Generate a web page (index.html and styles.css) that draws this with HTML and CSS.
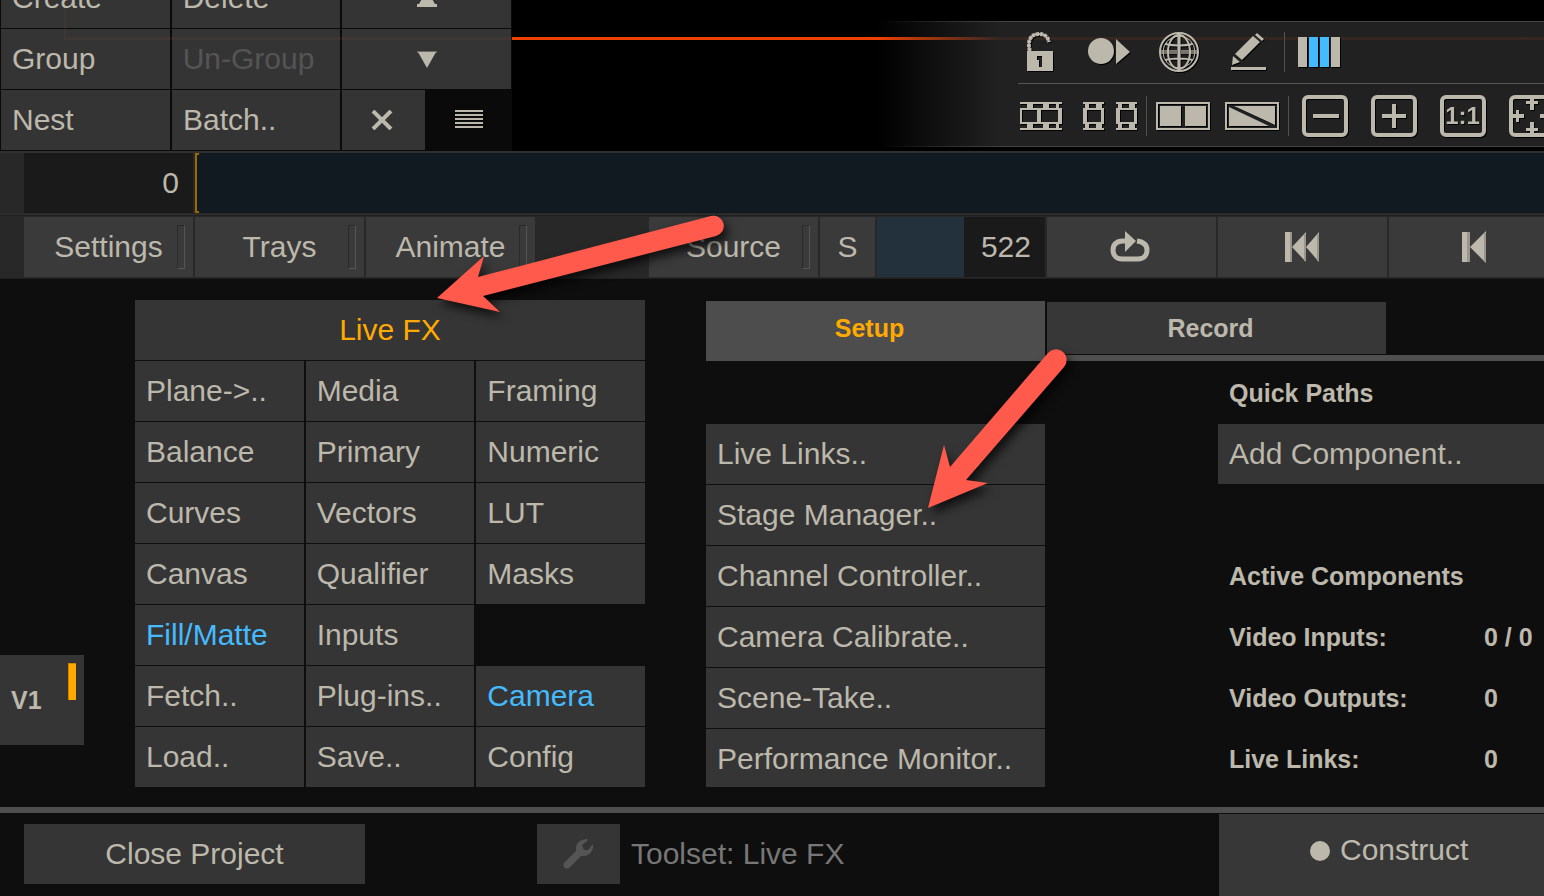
FILE: index.html
```html
<!DOCTYPE html>
<html lang="en">
<head>
<meta charset="utf-8">
<title>Live FX</title>
<link rel="stylesheet" href="styles.css">
</head>
<body>
<section class="viewport">
  <div class="crop-frame"></div>
  <div class="edit-panel">
    <div class="edit-row">
      <button class="btn">Create</button>
      <button class="btn">Delete</button>
      <button class="btn center" aria-label="Move up"><svg class="glyph" width="20" height="17" viewBox="0 0 20 17"><path d="M10 0L18 14H20V17H0V14H2z"/></svg></button>
    </div>
    <div class="edit-row">
      <button class="btn">Group</button>
      <button class="btn" disabled>Un-Group</button>
      <button class="btn center" aria-label="Move down"><svg class="glyph" width="20" height="17" viewBox="0 0 20 17"><path d="M1 1H19L10 17z"/><path d="M0 0H20V2H0z" opacity=".4"/></svg></button>
    </div>
    <div class="edit-row last">
      <button class="btn">Nest</button>
      <button class="btn">Batch..</button>
      <button class="btn center" aria-label="Close"><svg width="26" height="20" viewBox="0 0 26 20"><path class="stroke" stroke-width="4" d="M2 1L20 19M20 1L2 19"/></svg></button>
      <button class="btn center menu" aria-label="Menu"><svg class="glyph" width="28" height="20" viewBox="0 0 28 20"><path d="M0 0h28v2H0zM0 4h28v2H0zM0 8h28v2H0zM0 12h28v2H0zM0 16h28v2H0z"/></svg></button>
    </div>
  </div>
  <div class="toolbar">
    <div class="tool-row">
      <button class="tool" aria-label="Lock"><svg class="glyph" width="28" height="42" viewBox="0 0 28 42"><path class="stroke" stroke-width="4" stroke-dasharray="3 1" d="M3 20C0 11 3 3 12 3C18 3 21 6 22 11"/><path class="stroke" stroke-width="2" d="M3 20C0 11 3 3 12 3C18 3 21 6 22 11"/><path fill-rule="evenodd" d="M0 20H26V40H0zM10 25V29H12V36H15V25z"/></svg></button>
      <button class="tool" aria-label="Record and play"><svg class="glyph" width="44" height="28" viewBox="0 0 44 28"><circle cx="13" cy="13" r="13"/><path d="M28 1L42 14L28 26z"/></svg></button>
      <button class="tool" aria-label="Globe"><svg width="42" height="42" viewBox="0 0 42 42"><g class="stroke" stroke-width="2"><circle cx="21" cy="21" r="19"/><circle cx="21" cy="21" r="16" stroke-width="1"/><ellipse cx="21" cy="21" rx="11" ry="17"/><path d="M21 2V40M7 13Q21 16 35 13M7 29Q21 26 35 29"/><path stroke-width="4" opacity=".6" d="M3 21H39M21 3V39"/></g></svg></button>
      <button class="tool" aria-label="Draw"><svg class="glyph" width="36" height="38" viewBox="0 0 36 38"><path d="M5 21L23 3L30 9L12 27zM25 2L27 0L34 6L32 8zM3 23L10 29L2 32z"/><path d="M1 34H36V37H1z"/></svg></button>
      <span class="sep"></span>
      <button class="tool" aria-label="Columns"><svg class="glyph" width="46" height="30" viewBox="0 0 46 30"><path d="M0 0h9v30H0zM33 0h9v30h-9z"/><path class="blue" d="M11 0h9v30h-9zM22 0h9v30h-9z"/></svg></button>
    </div>
    <div class="tool-row">
      <button class="tool" aria-label="Film strip"><svg class="glyph" width="42" height="28" viewBox="0 0 42 28"><path fill-rule="evenodd" d="M0 0H42V2H0zM0 26H42V28H0zM7 2h6v4H7zM23 2h6v4h-6zM36 2h3v4h-3zM7 22h6v4H7zM23 22h6v4h-6zM36 22h3v4h-3zM0 6H42V22H0zM2 8V20H17V8zM21 8V20H38V8z"/></svg></button>
      <button class="tool" aria-label="Split film"><svg class="glyph" width="54" height="28" viewBox="0 0 54 28"><path fill-rule="evenodd" d="M0 0H21V2H0zM0 26H21V28H0zM2 2h4v4H2zM13 2h6v4h-6zM2 22h4v4H2zM13 22h6v4h-6zM0 6H21V22H0zM4 8V20H18V8zM33 0H54V2H33zM33 26H54V28H33zM35 2h4v4h-4zM46 2h6v4h-6zM35 22h4v4h-4zM46 22h6v4h-6zM33 6H54V22H33zM37 8V20H51V8z"/></svg></button>
      <span class="sep"></span>
      <button class="tool" aria-label="Dual view"><svg class="glyph" width="54" height="28" viewBox="0 0 54 28"><path fill-rule="evenodd" d="M0 0H54V28H0zM2 2V26H52V2zM4 4H25V24H4zM29 4H50V24H29z"/></svg></button>
      <button class="tool" aria-label="Wipe view"><svg class="glyph" width="54" height="28" viewBox="0 0 54 28"><path fill-rule="evenodd" d="M0 0H54V28H0zM2 2V26H52V2z"/><path d="M9 4H50V23zM4 5L44 24H4z"/></svg></button>
      <span class="sep"></span>
      <button class="tool" aria-label="Zoom out"><svg width="46" height="42" viewBox="0 0 46 42"><rect class="stroke" stroke-width="4" x="2" y="2" width="42" height="38" rx="4"/><path class="stroke" stroke-width="4" d="M11 21H37"/></svg></button>
      <button class="tool" aria-label="Zoom in"><svg width="46" height="42" viewBox="0 0 46 42"><rect class="stroke" stroke-width="4" x="2" y="2" width="42" height="38" rx="4"/><path class="stroke" stroke-width="4" d="M11 21H35M23 9V33"/></svg></button>
      <button class="tool"><span class="ratio">1:1</span></button>
      <button class="tool" aria-label="Fit"><svg class="glyph" width="46" height="42" viewBox="0 0 46 42"><rect class="stroke" stroke-width="4" x="2" y="2" width="42" height="38" rx="4"/><path d="M21 3h4v3h4v3h-4v6h-4V9h-4V6h4zM21 39h4v-3h4v-3h-4v-6h-4v6h-4v3h4zM4 19h3v-4h3v4h5v4h-5v4H7v-4H4zM42 19h-3v-4h-3v4h-5v4h5v4h3v-4h3z"/></svg></button>
    </div>
  </div>
</section>

<section class="timeline">
  <output class="frame-start">0</output>
  <div class="track"><span class="bracket"></span></div>
</section>

<nav class="transport">
  <button class="tbtn w1 grip">Settings</button>
  <button class="tbtn w1 grip">Trays</button>
  <button class="tbtn w1 grip">Animate</button>
  <span class="spacer"></span>
  <button class="tbtn w1 grip">Source</button>
  <button class="tbtn short">S</button>
  <div class="range"><output class="frame-end">522</output></div>
  <button class="tbtn w1" aria-label="Loop"><svg width="44" height="32" viewBox="0 0 44 32"><path class="stroke" stroke-width="5" d="M16 10H13C6 10 3 14 3 19C3 25 7 28 12 28H28C34 28 37 24 37 19C37 14 34 11 27 10"/><path class="fill" d="M15 0L26 10L15 21z"/></svg></button>
  <button class="tbtn w1" aria-label="Go to start"><svg width="36" height="30" viewBox="0 0 36 30"><path class="fill" d="M0 0h7v30H0zM7 15L21 0V30zM21 15L34 0V30z"/><path class="shade" d="M5 0h2v30H5zM19 2h2v27h-2zM32 2h2v27h-2z"/></svg></button>
  <button class="tbtn w1" aria-label="Previous"><svg width="24" height="32" viewBox="0 0 24 32"><path class="fill" d="M0 1h8v30H0zM8 16L24 0V32z"/><path class="shade" d="M5 1h3v30H5zM22 2h2v29h-2z"/></svg></button>
</nav>

<main class="workspace">
  <aside class="layers">
    <button class="layer"><span>V1</span><span class="marker"></span></button>
  </aside>
  <section class="tools">
    <button class="btn center title">Live FX</button>
    <button class="btn">Plane-&gt;..</button><button class="btn">Media</button><button class="btn">Framing</button>
    <button class="btn">Balance</button><button class="btn">Primary</button><button class="btn">Numeric</button>
    <button class="btn">Curves</button><button class="btn">Vectors</button><button class="btn">LUT</button>
    <button class="btn">Canvas</button><button class="btn">Qualifier</button><button class="btn">Masks</button>
    <button class="btn active">Fill/Matte</button><button class="btn">Inputs</button><span></span>
    <button class="btn">Fetch..</button><button class="btn">Plug-ins..</button><button class="btn active">Camera</button>
    <button class="btn">Load..</button><button class="btn">Save..</button><button class="btn">Config</button>
  </section>
  <section class="setup">
    <div class="tabs" role="tablist">
      <button class="tab selected" role="tab" aria-selected="true">Setup</button>
      <div class="tab-rest"><button class="tab" role="tab" aria-selected="false">Record</button></div>
    </div>
    <div class="setup-body">
      <div class="commands">
        <button class="btn">Live Links..</button>
        <button class="btn">Stage Manager..</button>
        <button class="btn">Channel Controller..</button>
        <button class="btn">Camera Calibrate..</button>
        <button class="btn">Scene-Take..</button>
        <button class="btn">Performance Monitor..</button>
      </div>
      <div class="status">
        <h2>Quick Paths</h2>
        <button class="btn">Add Component..</button>
        <h2 class="components">Active Components</h2>
        <dl>
          <dt>Video Inputs:</dt><dd>0 / 0</dd>
          <dt>Video Outputs:</dt><dd>0</dd>
          <dt>Live Links:</dt><dd>0</dd>
        </dl>
      </div>
    </div>
  </section>
</main>

<footer class="footer">
  <button class="btn center close">Close Project</button>
  <button class="btn center wrench" id="toolset" aria-label="Toolset"><svg width="32" height="30" viewBox="0 0 32 30"><path d="M1 24L13 12C12 5 17 0 24 0L25 1L19 6L21 11L25 11L30 5C31 13 25 18 18 17L6 29C3 31-1 28 1 24z"/></svg></button>
  <label class="toolset" for="toolset">Toolset: Live FX</label>
  <button class="construct"><span class="dot"></span>Construct</button>
</footer>

<svg class="arrows" aria-hidden="true">
  <path d="M437 298L484 256L478 277L711 216A10 10 0 0 1 716 236L483 296L500 312z"/>
  <path d="M928 508L944 445L950 467L1048 353A10 10 0 0 1 1064 367L966 480L988 483z"/>
</svg>
</body>
</html>
```

FILE: styles.css
```css
*, *::after { box-sizing: border-box; }

body {
  margin: 0;
  min-height: 100vh;
  display: flex;
  flex-direction: column;
  overflow: hidden;
  position: relative;
  background: #0e0e0e;
  color: #bcb8ac;
  font: 30px/34px "Liberation Sans", Arial, sans-serif;
}

button {
  margin: 0;
  padding: 0;
  border: 0;
  border-radius: 0;
  background: none;
  color: inherit;
  font: inherit;
  white-space: nowrap;
}

svg { display: block; flex: none; }
.glyph, .fill { fill: #bcb8ac; }
.stroke { fill: none; stroke: #bcb8ac; }
.blue { fill: #45bbff; }
.shade { fill: #9a968c; }

.btn {
  display: flex;
  align-items: center;
  height: 60px;
  padding: 0 11px;
  background: #353535;
}
.btn.center { justify-content: center; padding: 0; }
.btn:disabled { color: #545454; }
.btn.active { color: #45bbff; }
.btn.title { color: #ffaa00; grid-column: 1 / -1; }

/* Viewport */
.viewport {
  position: relative;
  display: flex;
  justify-content: space-between;
  height: 151px;
  overflow: hidden;
  background: #000;
}
.crop-frame {
  position: absolute;
  left: 64px;
  right: 0;
  top: 0;
  height: 40px;
  border: solid #f04000;
  border-width: 0 0 3px 2px;
}
.edit-panel {
  position: relative;
  flex: none;
  width: 512px;
  display: flex;
  flex-direction: column;
  justify-content: flex-end;
  gap: 1px;
  padding: 0 1px 1px;
  background: rgba(11, 11, 11, .9);
}
.edit-panel .btn { background: rgba(88, 88, 88, .55); }
.edit-row { display: grid; grid-template-columns: repeat(3, 1fr); gap: 2px; }
.edit-row.last { grid-template-columns: 169px 168px 83px 1fr; }
.edit-panel .btn.menu { background: none; }

.toolbar {
  position: relative;
  flex: none;
  width: 674px;
  margin: 21px 0 4px;
  padding-left: 148px;
  border: 1px solid transparent;
  border-width: 1px 0;
  background:
    linear-gradient(90deg, transparent 10px, #444 140px) top / 100% 1px no-repeat border-box,
    linear-gradient(90deg, transparent 10px, #444 140px) bottom / 100% 1px no-repeat border-box,
    linear-gradient(90deg, rgba(36, 36, 36, 0) 5px, rgba(36, 36, 36, .92) 130px) border-box;
}
.tool-row { display: flex; align-items: center; height: 62px; padding-top: 2px; }
.tool-row:first-child { padding: 0 0 2px; border-bottom: 1px solid #555; }
.tool {
  flex: none;
  display: flex;
  align-items: center;
  justify-content: center;
  width: 69px;
  height: 58px;
}
.tool:first-child { width: 57px; padding-right: 12px; }
.tool svg, .ratio { filter: drop-shadow(1px 1px 0 #000); }
.sep { flex: none; width: 1px; height: 40px; margin: 0 1px 0 2px; background: #505050; }
.ratio {
  width: 46px;
  height: 42px;
  border: 4px solid #bcb8ac;
  border-radius: 6px;
  font-weight: bold;
  font-size: 24px;
  line-height: 34px;
}

/* Timeline */
.timeline {
  display: flex;
  gap: 2px;
  height: 64px;
  padding: 0 0 1px 24px;
  border: solid #303030;
  border-width: 2px 0 1px;
  background: #282828;
}
.frame-start {
  width: 169px;
  padding-right: 14px;
  line-height: 60px;
  text-align: right;
  background: #1a1a1a;
}
.track { flex: 1; display: flex; background: #121a21; }
.bracket { width: 4px; border: 2px solid #9c6800; border-right: 0; }

/* Transport */
.transport {
  display: flex;
  gap: 2px;
  height: 64px;
  padding: 1px 0 1px 24px;
  border: solid #202020;
  border-width: 1px 0;
  background: #282828;
}
.tbtn {
  position: relative;
  flex: none;
  display: flex;
  align-items: center;
  justify-content: center;
  height: 60px;
  background: #3a3a3a;
}
.w1 { width: 169px; }
.short { width: 55px; }
.spacer { flex: none; width: 110px; }
.grip::after {
  content: "";
  position: absolute;
  right: 8px;
  top: 8px;
  width: 8px;
  height: 44px;
  border: 1px solid;
  border-color: #2a2a2a #555 #555 #2a2a2a;
}
.range { flex: none; width: 168px; display: flex; justify-content: flex-end; background: #23313d; }
.frame-end { width: 81px; padding-right: 14px; line-height: 60px; text-align: right; background: #1a1a1a; }

/* Workspace */
.workspace { display: flex; padding: 21px 0 18px; border-bottom: 6px solid #4f4f4f; box-sizing: content-box; }
.layers { flex: none; width: 135px; display: flex; align-items: flex-end; padding-bottom: 44px; }
.layer {
  display: flex;
  justify-content: space-between;
  width: 84px;
  height: 90px;
  padding: 8px 8px 8px 11px;
  background: #353535;
  font-size: 25px;
  font-weight: bold;
  line-height: 74px;
}
.marker { width: 8px; height: 37px; background: #ffaa00; border: solid #c98600; border-width: 1px 0 0 1px; }
.tools { flex: none; width: 510px; display: grid; grid-template-columns: repeat(3, 1fr); gap: 1px 2px; align-content: start; }

.setup { flex: 1; min-width: 0; margin-left: 61px; padding-top: 1px; }
.tabs { display: flex; gap: 2px; }
.tab-rest { flex: 1; padding-top: 1px; border-bottom: 6px solid #4f4f4f; }
.tab { display: block; width: 339px; height: 52px; padding-right: 12px; background: #373737; font-size: 25px; font-weight: bold; }
.tab.selected { height: 60px; padding-bottom: 6px; background: #4d4d4d; color: #ffaa00; }
.setup-body { display: flex; justify-content: space-between; }
.commands { width: 339px; padding-top: 63px; display: grid; gap: 1px; align-content: start; }
.commands .btn:last-child { height: 58px; padding-top: 2px; }
.status { width: 326px; }
.status .btn { width: 100%; }
.status h2, .status dl {
  margin: 0;
  padding: 3px 11px 1px;
  font-size: 25px;
  font-weight: bold;
  line-height: 59px;
}
.status .components { margin-top: 60px; padding-bottom: 2px; }
.status dl { display: grid; grid-template-columns: 255px 1fr; row-gap: 2px; padding: 0 0 0 11px; line-height: 59px; }
.status dd { margin: 0; }

/* Footer */
.footer { flex: 1; display: flex; padding-top: 1px; }
.footer .btn { margin-top: 10px; }
.close { width: 341px; margin-left: 24px; }
.wrench { width: 83px; margin-left: 172px; }
.wrench svg { fill: #555; }
.toolset { margin: 10px 0 0 11px; line-height: 60px; color: #777; }
.construct {
  display: flex;
  align-items: flex-start;
  gap: 10px;
  width: 325px;
  min-height: 82px;
  margin-left: auto;
  padding: 19px 0 0 91px;
  background: #373737;
}
.dot { width: 20px; height: 20px; margin-top: 8px; border-radius: 50%; background: #bcb8ac; }

/* Callout arrows over the page */
.arrows {
  position: absolute;
  inset: 0;
  width: 100%;
  height: 100%;
  pointer-events: none;
  fill: #ff5a4c;
  filter: drop-shadow(4px 6px 5px rgba(0, 0, 0, .7));
}
```
